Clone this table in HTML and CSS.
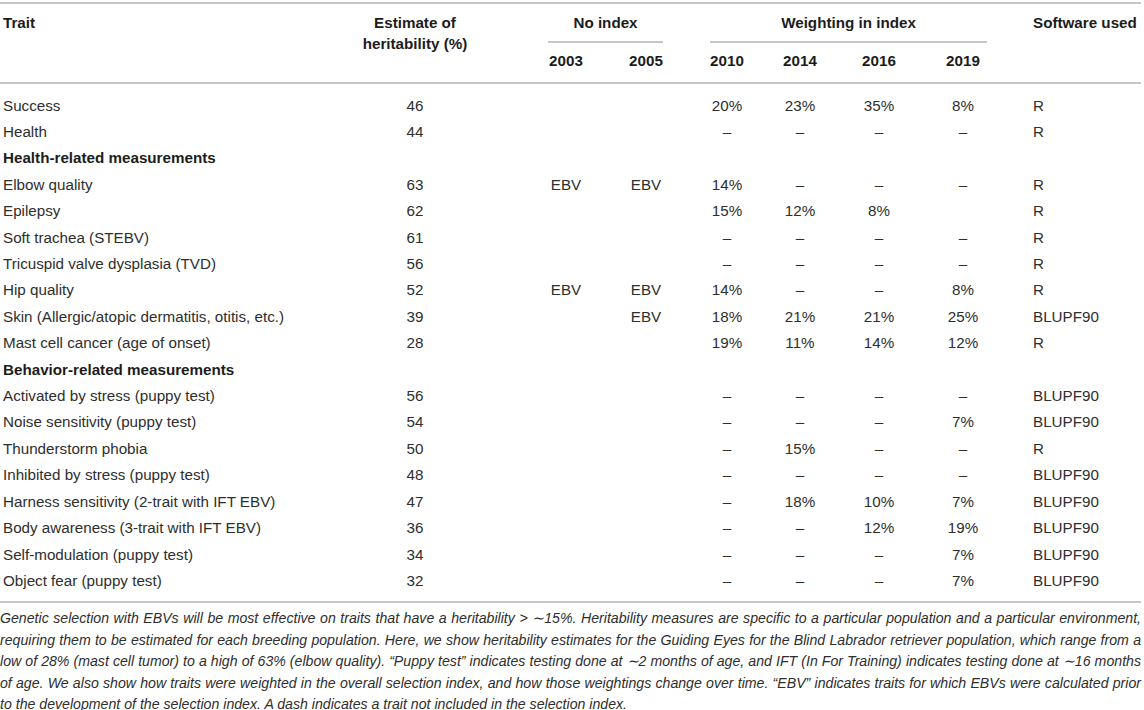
FILE: index.html
```html
<!DOCTYPE html>
<html lang="en">
<head>
<meta charset="utf-8">
<title>Table</title>
<link rel="stylesheet" href="styles.css">
</head>
<body>
<div class="wrap">
  <div class="table">
    <div class="thead">
      <div class="h-trait">Trait</div>
      <div class="h-est">Estimate of<br>heritability (%)</div>
      <div class="h-noindex"><div class="group-label">No index</div></div>
      <div class="h-weight"><div class="group-label">Weighting in index</div></div>
      <div class="h-sw">Software used</div>
      <div class="h-y y3">2003</div>
      <div class="h-y y5">2005</div>
      <div class="h-y y10">2010</div>
      <div class="h-y y14">2014</div>
      <div class="h-y y16">2016</div>
      <div class="h-y y19">2019</div>
    </div>
    <div class="tbody">
      <div class="row"><span>Success</span><span>46</span><span></span><span></span><span>20%</span><span>23%</span><span>35%</span><span>8%</span><span>R</span></div>
      <div class="row"><span>Health</span><span>44</span><span></span><span></span><span>–</span><span>–</span><span>–</span><span>–</span><span>R</span></div>
      <div class="row section"><span>Health-related measurements</span></div>
      <div class="row"><span>Elbow quality</span><span>63</span><span>EBV</span><span>EBV</span><span>14%</span><span>–</span><span>–</span><span>–</span><span>R</span></div>
      <div class="row"><span>Epilepsy</span><span>62</span><span></span><span></span><span>15%</span><span>12%</span><span>8%</span><span></span><span>R</span></div>
      <div class="row"><span>Soft trachea (STEBV)</span><span>61</span><span></span><span></span><span>–</span><span>–</span><span>–</span><span>–</span><span>R</span></div>
      <div class="row"><span>Tricuspid valve dysplasia (TVD)</span><span>56</span><span></span><span></span><span>–</span><span>–</span><span>–</span><span>–</span><span>R</span></div>
      <div class="row"><span>Hip quality</span><span>52</span><span>EBV</span><span>EBV</span><span>14%</span><span>–</span><span>–</span><span>8%</span><span>R</span></div>
      <div class="row"><span>Skin (Allergic/atopic dermatitis, otitis, etc.)</span><span>39</span><span></span><span>EBV</span><span>18%</span><span>21%</span><span>21%</span><span>25%</span><span>BLUPF90</span></div>
      <div class="row"><span>Mast cell cancer (age of onset)</span><span>28</span><span></span><span></span><span>19%</span><span>11%</span><span>14%</span><span>12%</span><span>R</span></div>
      <div class="row section"><span>Behavior-related measurements</span></div>
      <div class="row"><span>Activated by stress (puppy test)</span><span>56</span><span></span><span></span><span>–</span><span>–</span><span>–</span><span>–</span><span>BLUPF90</span></div>
      <div class="row"><span>Noise sensitivity (puppy test)</span><span>54</span><span></span><span></span><span>–</span><span>–</span><span>–</span><span>7%</span><span>BLUPF90</span></div>
      <div class="row"><span>Thunderstorm phobia</span><span>50</span><span></span><span></span><span>–</span><span>15%</span><span>–</span><span>–</span><span>R</span></div>
      <div class="row"><span>Inhibited by stress (puppy test)</span><span>48</span><span></span><span></span><span>–</span><span>–</span><span>–</span><span>–</span><span>BLUPF90</span></div>
      <div class="row"><span>Harness sensitivity (2-trait with IFT EBV)</span><span>47</span><span></span><span></span><span>–</span><span>18%</span><span>10%</span><span>7%</span><span>BLUPF90</span></div>
      <div class="row"><span>Body awareness (3-trait with IFT EBV)</span><span>36</span><span></span><span></span><span>–</span><span>–</span><span>12%</span><span>19%</span><span>BLUPF90</span></div>
      <div class="row"><span>Self-modulation (puppy test)</span><span>34</span><span></span><span></span><span>–</span><span>–</span><span>–</span><span>7%</span><span>BLUPF90</span></div>
      <div class="row"><span>Object fear (puppy test)</span><span>32</span><span></span><span></span><span>–</span><span>–</span><span>–</span><span>7%</span><span>BLUPF90</span></div>
    </div>
  </div>
  <p class="caption">Genetic selection with EBVs will be most effective on traits that have a heritability &gt; ∼15%. Heritability measures are specific to a particular population and a particular environment, requiring them to be estimated for each breeding population. Here, we show heritability estimates for the Guiding Eyes for the Blind Labrador retriever population, which range from a low of 28% (mast cell tumor) to a high of 63% (elbow quality). “Puppy test” indicates testing done at ∼2 months of age, and IFT (In For Training) indicates testing done at ∼16 months of age. We also show how traits were weighted in the overall selection index, and how those weightings change over time. “EBV” indicates traits for which EBVs were calculated prior to the development of the selection index. A dash indicates a trait not included in the selection index.</p>
</div>
</body>
</html>
```

FILE: styles.css
```css
html, body {
  margin: 0;
  padding: 0;
  background: #ffffff;
}

body {
  font-family: "Liberation Sans", Arial, Helvetica, sans-serif;
  font-size: 15.2px;
  color: #2e2e2e;
}

.wrap {
  width: 1141px;
  padding-top: 2px;
}

.table {
  --cols: [trait] 372px [est] 86px 68px [y3] 80px [y5] 80px 3px [y10] 76px [y14] 70px [y16] 88px [y19] 80px 30px [sw] 1fr;
  border-top: 2px solid #c6c6c6;
  border-bottom: 2px solid #c6c6c6;
}

.thead {
  display: grid;
  grid-template-columns: var(--cols);
  grid-template-rows: auto auto;
  border-bottom: 2px solid #c6c6c6;
  font-weight: bold;
  color: #1c1c1c;
  line-height: 21.3px;
}

.h-trait {
  grid-column: trait;
  grid-row: 1 / span 2;
  padding: 8px 0 0 3px;
}

.h-est {
  grid-column: est;
  grid-row: 1 / span 2;
  margin: 0 -30px;
  padding-top: 8px;
  text-align: center;
  white-space: nowrap;
}

.h-noindex {
  grid-column: y3 / span 2;
  grid-row: 1;
  padding-top: 8px;
}

.h-noindex .group-label {
  margin: 0 23px 0 22px;
}

.h-weight {
  grid-column: y10 / span 4;
  grid-row: 1;
  padding-top: 8px;
}

.h-weight .group-label {
  margin: 0 16px 0 21px;
}

.group-label {
  text-align: center;
  padding-bottom: 8px;
  border-bottom: 2px solid #c6c6c6;
}

.h-sw {
  grid-column: sw;
  grid-row: 1 / span 2;
  padding-top: 8px;
  white-space: nowrap;
}

.h-y {
  grid-row: 2;
  text-align: center;
  padding: 7px 0 10px;
}

.y3 { grid-column: y3; }
.y5 { grid-column: y5; }
.y10 { grid-column: y10; }
.y14 { grid-column: y14; }
.y16 { grid-column: y16; }
.y19 { grid-column: y19; }

.tbody {
  padding: 9px 0 7px;
}

.row {
  display: grid;
  grid-template-columns: var(--cols);
  line-height: 26.42px;
  height: 26.42px;
}

.row > span {
  text-align: center;
  white-space: nowrap;
}

.row > span:nth-child(1) {
  grid-column: trait;
  text-align: left;
  padding-left: 3px;
}

.row > span:nth-child(2) { grid-column: est; }
.row > span:nth-child(3) { grid-column: y3; }
.row > span:nth-child(4) { grid-column: y5; }
.row > span:nth-child(5) { grid-column: y10; }
.row > span:nth-child(6) { grid-column: y14; }
.row > span:nth-child(7) { grid-column: y16; }
.row > span:nth-child(8) { grid-column: y19; }
.row > span:nth-child(9) {
  grid-column: sw;
  text-align: left;
}

.row.section > span:nth-child(1) {
  grid-column: trait / -1;
  font-weight: bold;
  color: #1c1c1c;
}

.caption {
  margin: 5px 0 0;
  font-size: 14.15px;
  font-style: italic;
  line-height: 21.5px;
  text-align: justify;
  color: #2e2e2e;
}
```
